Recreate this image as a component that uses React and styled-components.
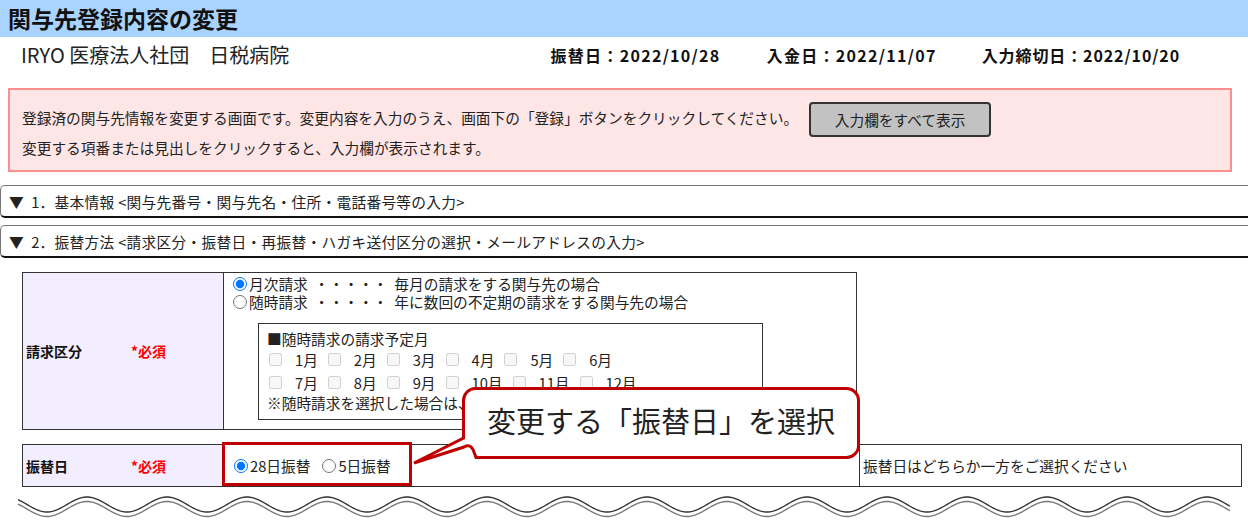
import React from 'react';
import styled, { createGlobalStyle } from 'styled-components';

const GlobalStyle = createGlobalStyle`
  html, body {
    margin: 0;
    padding: 0;
    background: #fff;
  }
  body {
    font-family: "Noto Sans CJK JP", "Noto Sans", sans-serif;
    color: #222;
    overflow: hidden;
  }
`;

const Page = styled.div`
  position: relative;
  width: 1248px;
  height: 527px;
  overflow: hidden;
`;

/* Header */
const TitleBar = styled.h1`
  margin: 0;
  height: 37px;
  padding-left: 8px;
  background: #a9d4ff;
  font-size: 23px;
  font-weight: 700;
  line-height: 37px;
  color: #111;
`;

const InfoRow = styled.div`
  display: flex;
  align-items: center;
  height: 36px;
  padding: 0 68px 0 21px;
`;

const Office = styled.div`
  flex: 1;
  font-size: 20px;
  line-height: 1;
`;

const DateItem = styled.div`
  margin-left: ${({ $gap }) => $gap || '44px'};
  font-size: 16px;
  font-weight: 700;
  letter-spacing: ${({ $ls }) => $ls || '1.3px'};
  line-height: 1;
  color: #111;
`;

/* Notice */
const Notice = styled.div`
  box-sizing: border-box;
  height: 84px;
  margin: 15px 16px 0 8px;
  padding: 12px 12px 0 12px;
  border: 2px solid #ff8f8f;
  background: #ffe6e6;
  font-size: 14.7px;
`;

const NoticeLine = styled.div`
  display: flex;
  align-items: center;
  height: ${({ $tall }) => ($tall ? '35px' : '20px')};
  margin-top: ${({ $tall }) => ($tall ? '0' : '1px')};
  line-height: 20px;
`;

const NoticeText = styled.span`
  margin-bottom: 3px;
`;

const ShowAllButton = styled.button`
  box-sizing: border-box;
  width: 182px;
  height: 35px;
  margin-left: 11px;
  border: 2px solid #333;
  border-radius: 4px;
  background: #c2c2c2;
  font-family: inherit;
  font-size: 14.7px;
  color: #222;
  padding: 0;
`;

/* Accordion headers */
const Sections = styled.div`
  display: flex;
  flex-direction: column;
  gap: 7px;
  margin: 13px -12px 0 0;
`;

const SectionHead = styled.div`
  box-sizing: border-box;
  height: 33px;
  padding-left: 8px;
  display: flex;
  align-items: center;
  border: 1px solid #777;
  border-bottom: 2px solid #111;
  border-radius: 5px;
  font-size: 14.7px;
  letter-spacing: 0.3px;
  color: #222;
  white-space: pre;
`;

/* Form tables */
const FormTable = styled.table`
  border-collapse: collapse;
  margin: ${({ $top }) => $top} 0 0 22px;
  width: ${({ $width }) => $width};
  font-size: 14.7px;

  td {
    border: 1px solid #333;
    padding: 0;
    vertical-align: middle;
  }
`;

const LabelCell = styled.td`
  width: 197px;
  padding-left: 3px !important;
  background: #f3eeff;
  height: ${({ $h }) => $h};
`;

const Label = styled.div`
  display: flex;
  align-items: center;
  font-size: 14px;
`;

const LabelName = styled.span`
  width: 105px;
  font-weight: 700;
  color: #111;
`;

const Required = styled.span`
  font-weight: 700;
  color: #ff0000;
`;

const ValueCell = styled.td`
  padding: ${({ $pad }) => $pad} !important;
  width: ${({ $w }) => $w || 'auto'};
`;

const NoteCell = styled.td`
  padding-left: 3px !important;
  color: #222;
`;

const RadioRow = styled.div`
  display: flex;
  align-items: center;
  height: 18px;
  white-space: pre;
`;

const Radio = styled.input.attrs({ type: 'radio' })`
  width: 14px;
  height: 14px;
  margin: 0 2px 0 0;
`;

const RadioText = styled.span`
  display: inline-block;
  height: 18px;
  line-height: 18px;
  margin-right: ${({ $gap }) => $gap || '0'};
`;

const MonthBox = styled.div`
  box-sizing: border-box;
  width: 505px;
  margin: 12px 0 0 25px;
  padding: 6px 0 7px 8px;
  border: 1px solid #333;
  line-height: 18px;
  white-space: nowrap;
`;

const CheckRow = styled.div`
  display: flex;
  align-items: center;
  height: 23px;
`;

const Check = styled.input.attrs({ type: 'checkbox', disabled: true })`
  width: 13px;
  height: 13px;
  margin: 0 0 0 2px;
`;

const Month = styled.span`
  margin: 0 8px 0 13px;
`;

/* Annotation overlays */
const Highlight = styled.div`
  position: absolute;
  left: 222px;
  top: 442px;
  width: 190px;
  height: 44px;
  box-sizing: border-box;
  border: 3px solid #c00000;
  pointer-events: none;
`;

const Callout = styled.div`
  position: absolute;
  left: 400px;
  top: 380px;
  width: 470px;
  height: 95px;
`;

const CalloutShape = styled.svg`
  position: absolute;
  inset: 0;
`;

const CalloutText = styled.div`
  position: absolute;
  left: 62px;
  top: 7px;
  width: 398px;
  height: 66px;
  display: flex;
  align-items: center;
  justify-content: center;
  font-size: 29px;
  color: #222;
  white-space: nowrap;
`;

const Wave = styled.svg`
  display: block;
  margin-top: 2px;
`;

const wavePath = (c, amp) => {
  const pts = [];
  for (let x = 18; x <= 1230; x += 2) {
    const y = c - amp * Math.cos((2 * Math.PI * (x - 7)) / 80);
    pts.push(`${x},${y.toFixed(2)}`);
  }
  return 'M' + pts.join(' L');
};

const months1 = ['1月', '2月', '3月', '4月', '5月', '6月'];
const months2 = ['7月', '8月', '9月', '10月', '11月', '12月'];

export default function App() {
  return (
    <Page>
      <GlobalStyle />
      <TitleBar>関与先登録内容の変更</TitleBar>
      <InfoRow>
        <Office>IRYO 医療法人社団　日税病院</Office>
        <DateItem>振替日：2022/10/28</DateItem>
        <DateItem $gap="46px">入金日：2022/11/07</DateItem>
        <DateItem $gap="45px" $ls="0.9px">入力締切日：2022/10/20</DateItem>
      </InfoRow>

      <Notice>
        <NoticeLine $tall>
          <NoticeText>
            登録済の関与先情報を変更する画面です。変更内容を入力のうえ、画面下の「登録」ボタンをクリックしてください。
          </NoticeText>
          <ShowAllButton>入力欄をすべて表示</ShowAllButton>
        </NoticeLine>
        <NoticeLine>変更する項番または見出しをクリックすると、入力欄が表示されます。</NoticeLine>
      </Notice>

      <Sections>
        <SectionHead>{'▼  1．基本情報 <関与先番号・関与先名・住所・電話番号等の入力>'}</SectionHead>
        <SectionHead>{'▼  2．振替方法 <請求区分・振替日・再振替・ハガキ送付区分の選択・メールアドレスの入力>'}</SectionHead>
      </Sections>

      <FormTable $top="14px" $width="835px">
        <tbody>
          <tr>
            <LabelCell $h="156px">
              <Label>
                <LabelName>請求区分</LabelName>
                <Required>*必須</Required>
              </Label>
            </LabelCell>
            <ValueCell $pad="2px 0 9px 9px">
              <RadioRow>
                <Radio name="kubun" defaultChecked />
                <RadioText>{'月次請求  ・・・・・  毎月の請求をする関与先の場合'}</RadioText>
              </RadioRow>
              <RadioRow>
                <Radio name="kubun" />
                <RadioText>{'随時請求  ・・・・・  年に数回の不定期の請求をする関与先の場合'}</RadioText>
              </RadioRow>
              <MonthBox>
                <div>■随時請求の請求予定月</div>
                <CheckRow>
                  {months1.map((m) => (
                    <React.Fragment key={m}>
                      <Check />
                      <Month>{m}</Month>
                    </React.Fragment>
                  ))}
                </CheckRow>
                <CheckRow>
                  {months2.map((m) => (
                    <React.Fragment key={m}>
                      <Check />
                      <Month>{m}</Month>
                    </React.Fragment>
                  ))}
                </CheckRow>
                <div>※随時請求を選択した場合は、請求予定月を選択してください</div>
              </MonthBox>
            </ValueCell>
          </tr>
        </tbody>
      </FormTable>

      <FormTable $top="14px" $width="1220px">
        <tbody>
          <tr>
            <LabelCell $h="41px">
              <Label>
                <LabelName>振替日</LabelName>
                <Required>*必須</Required>
              </Label>
            </LabelCell>
            <ValueCell $pad="0 0 0 10px" $w="625px">
              <RadioRow>
                <Radio name="furikae" defaultChecked />
                <RadioText $gap="12px">28日振替</RadioText>
                <Radio name="furikae" />
                <RadioText>5日振替</RadioText>
              </RadioRow>
            </ValueCell>
            <NoteCell>振替日はどちらか一方をご選択ください</NoteCell>
          </tr>
        </tbody>
      </FormTable>

      <Wave width="1248" height="36" viewBox="0 0 1248 36">
        <path d={wavePath(15.5, 7.5)} fill="none" stroke="#333" strokeWidth="1.4" />
        <path d={wavePath(20, 7.5)} fill="none" stroke="#777" strokeWidth="1.4" />
      </Wave>

      <Highlight />
      <Callout>
        <CalloutShape width="470" height="95" viewBox="400 380 470 95">
          <path
            d="M476 457.5 L846 457.5 A12 12 0 0 0 858.5 445.5 L858.5 400.5 A12 12 0 0 0 846 388.5 L475.5 388.5 A12 12 0 0 0 463.5 400.5 L463.5 438 L414 463 L464 447 Q471 443 474 452 Z"
            fill="#fff"
            stroke="#c00000"
            strokeWidth="3"
            strokeLinejoin="miter"
          />
        </CalloutShape>
        <CalloutText>変更する「振替日」を選択</CalloutText>
      </Callout>
    </Page>
  );
}
